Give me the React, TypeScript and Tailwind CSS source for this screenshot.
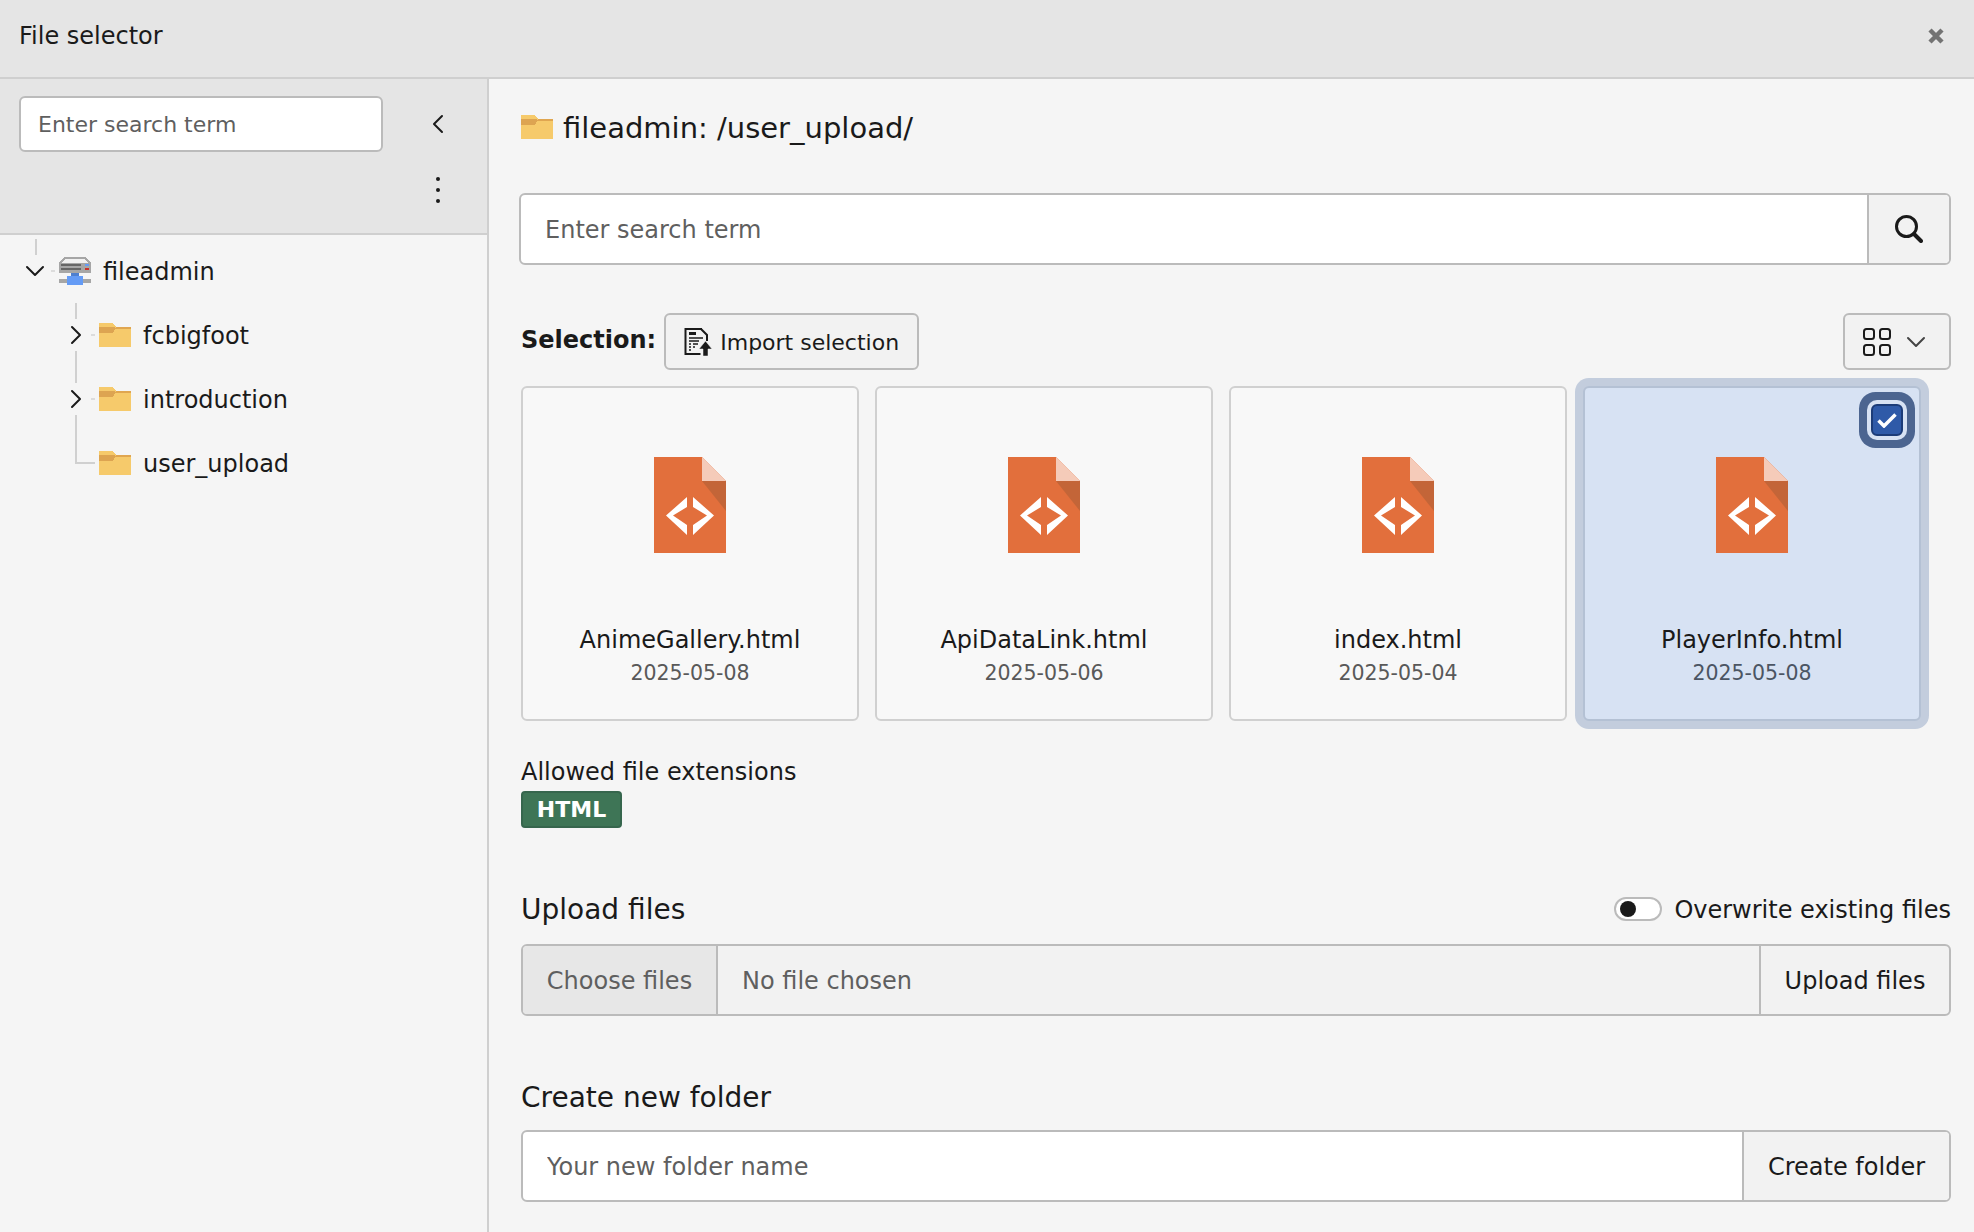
import React from 'react';
import { ChevronDown, ChevronLeft, ChevronRight } from 'lucide-react';

const files = [
  { name: 'AnimeGallery.html', date: '2025-05-08', selected: false },
  { name: 'ApiDataLink.html', date: '2025-05-06', selected: false },
  { name: 'index.html', date: '2025-05-04', selected: false },
  { name: 'PlayerInfo.html', date: '2025-05-08', selected: true },
];

function FolderIcon() {
  return (
    <svg width="32" height="24" viewBox="0 0 32 24" className="shrink-0" shapeRendering="crispEdges">
      <path d="M0 0h14l3 4h15v20H0z" fill="#f6ca6b" />
      <path d="M17 4h15v2H16z" fill="#e0a650" />
      <path d="M0 4h16v2l-2 4H0z" fill="#dda451" />
    </svg>
  );
}

function StorageIcon() {
  return (
    <svg width="32" height="28" viewBox="0 0 32 28" className="shrink-0" shapeRendering="crispEdges">
      <path d="M5 0h22l5 6v10H0V6z" fill="#a6a6a6" />
      <path d="M6 2h20l3 4H3z" fill="#f1f1f1" />
      <path d="M2 7h20v2H2zM2 11h20v2H2z" fill="#666" />
      <path d="M26 7h4v2h-4z" fill="#649bf5" />
      <path d="M26 11h4v2h-4z" fill="#c9302c" />
      <path d="M0 22h32v4H0z" fill="#a6a6a6" />
      <path d="M12 16h8v3h-8z" fill="#4f80cf" />
      <path d="M8 19h16v9H8z" fill="#649bf5" />
    </svg>
  );
}

function HtmlFileIcon() {
  return (
    <svg width="72" height="96" viewBox="0 0 72 96">
      <path d="M0 0h48l24 24v72H0z" fill="#e26f3c" />
      <path d="M48 0v24h24z" fill="#f5cbb9" />
      <path d="M48 24h24v30z" fill="#c36538" />
      <path d="M33 40v10l-14 8.500 14 9.500v10L12 58.500z" fill="#fff" />
      <path d="M39 40v10l14 8.500-14 9.500v10l21-19.500z" fill="#fff" />
    </svg>
  );
}

function ImportIcon() {
  return (
    <svg width="28" height="28" viewBox="0 0 28 28" fill="none">
      <path d="M18 1H1.500v25h15" stroke="#1a1a1a" strokeWidth="2" />
      <path d="M17 1l6 6v6" stroke="#1a1a1a" strokeWidth="2" />
      <path d="M5 4h7v3H5z" fill="#1a1a1a" />
      <path d="M5 10h14M5 13h10M5 16h2M5 19h2M5 22h2M9 16h5M9 19h2" stroke="#1a1a1a" strokeWidth="1.500" />
      <path d="M21.500 13l6.500 8h-4v7h-5v-7h-4z" fill="#1a1a1a" stroke="#f2f2f2" strokeWidth="0.500" />
    </svg>
  );
}

function GridIcon() {
  return (
    <svg width="28" height="28" viewBox="0 0 28 28" fill="none" stroke="#1a1a1a" strokeWidth="2">
      <rect x="1" y="1" width="10" height="10" rx="2.500" />
      <rect x="17" y="1" width="10" height="10" rx="2.500" />
      <rect x="1" y="17" width="10" height="10" rx="2.500" />
      <rect x="17" y="17" width="10" height="10" rx="2.500" />
    </svg>
  );
}

function SearchIcon() {
  return (
    <svg width="28" height="28" viewBox="0 0 28 28" fill="none" stroke="#1a1a1a">
      <circle cx="11.500" cy="11.500" r="10" strokeWidth="3" />
      <path d="M19 19l7 7" strokeWidth="4" strokeLinecap="round" />
    </svg>
  );
}

function FileCard({ name, date, selected }: { name: string; date: string; selected: boolean }) {
  return (
    <div
      className={
        selected
          ? 'relative flex h-[335px] w-[338px] flex-col items-center rounded-[6px] border-2 border-[#b4c1d4] bg-[#d7e2f3] pt-[69px] shadow-[0_0_0_8px_#c3cddd]'
          : 'relative flex h-[335px] w-[338px] flex-col items-center rounded-[6px] border-2 border-[#d0d0d0] bg-[#f8f8f8] pt-[69px]'
      }
    >
      <HtmlFileIcon />
      <div className="mt-[72px] text-[24px] leading-[30px] text-[#1a1a1a]">{name}</div>
      <div className={selected ? 'mt-[3px] text-[20.500px] leading-[30px] text-[#4b5563]' : 'mt-[3px] text-[20.500px] leading-[30px] text-[#595959]'}>
        {date}
      </div>
      {selected && (
        <div className="absolute right-[16px] top-[16px] flex h-[32px] w-[32px] items-center justify-center rounded-[6px] border-2 border-[#1c3c78] bg-[#2f5aa8] shadow-[0_0_0_4px_#d7e2f3,0_0_0_12px_#4c6590]">
          <svg width="20" height="16" viewBox="0 0 20 16" fill="none" stroke="#fff" strokeWidth="3.500">
            <path d="M1.500 8.500l5.500 5.500L18.500 2.500" />
          </svg>
        </div>
      )}
    </div>
  );
}

function TreeRow({ name, last }: { name: string; last?: boolean }) {
  return (
    <div className="relative flex h-[64px] items-center">
      {/* connector lines of the tree */}
      {last ? (
        <>
          <div className="absolute left-[19px] top-0 h-[33px] w-[2px] bg-[#d0d0d0]" />
          <div className="absolute left-[19px] top-[31px] h-[2px] w-[20px] bg-[#d0d0d0]" />
        </>
      ) : (
        <>
          <div className="absolute left-[19px] top-0 h-[16px] w-[2px] bg-[#d0d0d0]" />
          <div className="absolute bottom-0 left-[19px] h-[16px] w-[2px] bg-[#d0d0d0]" />
          <div className="absolute left-[35px] top-[31px] h-[2px] w-[4px] bg-[#dcdcdc]" />
        </>
      )}
      <div className="flex w-[40px] shrink-0 items-center justify-center">
        {!last && <ChevronRight size={32} strokeWidth={1.500} className="text-[#1a1a1a]" />}
      </div>
      <div className="ml-[3px]">
        <FolderIcon />
      </div>
      <span className="ml-[12px] pt-[2px] text-[24px] text-[#1a1a1a]">{name}</span>
    </div>
  );
}

export default function App() {
  return (
    <div className="flex h-[1232px] w-[1974px] flex-col overflow-hidden bg-[#f5f5f5] font-['DejaVu_Sans',sans-serif] text-[#1a1a1a]">
      <header className="flex h-[79px] shrink-0 items-center justify-between border-b-2 border-[#cfcfcf] bg-[#e5e5e5] pl-[19px] pr-[30px] pb-[8px]">
        <h1 className="pt-[2px] text-[24px]">File selector</h1>
        <svg width="16" height="16" viewBox="0 0 16 16" fill="none" stroke="#737373" strokeWidth="4.500" className="mb-[-2px]">
          <path d="M2 2l12 12M14 2L2 14" />
        </svg>
      </header>

      <div className="flex min-h-0 flex-1">
        {/* tree */}
        <aside className="w-[489px] shrink-0 border-r-2 border-[#cfcfcf]">
          <div className="h-[156px] border-b-2 border-[#cfcfcf] bg-[#e5e5e5] pl-[19px] pr-[33px] pt-[17px]">
            <div className="flex items-center justify-between">
              <input
                placeholder="Enter search term"
                className="h-[56px] w-[364px] rounded-[6px] border-2 border-[#bbb] bg-white px-[17px] text-[22px] outline-none placeholder:text-[#5f5f5f]"
              />
              <ChevronLeft size={32} strokeWidth={1.500} className="text-[#1a1a1a]" />
            </div>
            <div className="mt-[25px] flex justify-end pr-[14px]">
              <div className="flex h-[26px] flex-col justify-between">
                <div className="h-[4px] w-[4px] rounded-full bg-[#1a1a1a]" />
                <div className="h-[4px] w-[4px] rounded-full bg-[#1a1a1a]" />
                <div className="h-[4px] w-[4px] rounded-full bg-[#1a1a1a]" />
              </div>
            </div>
          </div>
          <div className="pl-[15px] pt-[4px]">
            <div className="relative flex h-[64px] items-center">
              <div className="absolute left-[20px] top-0 h-[16px] w-[2px] bg-[#d0d0d0]" />
              <div className="flex w-[40px] shrink-0 items-center justify-center">
                <ChevronDown size={32} strokeWidth={1.500} />
              </div>
              <div className="absolute left-[36px] top-[31px] h-[2px] w-[4px] bg-[#dcdcdc]" />
              <div className="ml-[4px]">
                <StorageIcon />
              </div>
              <span className="ml-[12px] pt-[2px] text-[24px]">fileadmin</span>
            </div>
            <div className="pl-[41px]">
              <TreeRow name="fcbigfoot" />
              <TreeRow name="introduction" />
              <TreeRow name="user_upload" last />
            </div>
          </div>
        </aside>

        {/* main */}
        <main className="min-w-0 flex-1 pl-[32px] pr-[23px]">
          <div className="flex h-[78px] items-center pt-[18px]">
            <FolderIcon />
            <h2 className="ml-[10px] pt-[4px] text-[29px]">fileadmin: /user_upload/</h2>
          </div>

          <div className="mt-[36px] -ml-[2px] flex h-[72px] rounded-[6px] border-2 border-[#bbb] bg-white">
            <input
              placeholder="Enter search term"
              className="min-w-0 flex-1 bg-transparent px-[24px] pt-[2px] text-[24px] outline-none placeholder:text-[#5f5f5f]"
            />
            <button className="flex w-[82px] items-center justify-center rounded-r-[4px] border-l-2 border-[#bbb] bg-[#f2f2f2]">
              <SearchIcon />
            </button>
          </div>

          <div className="mt-[48px] flex h-[57px] items-center">
            <span className="pb-[4px] text-[24px] font-bold">Selection:</span>
            <button className="ml-[8px] flex h-[57px] w-[255px] items-center justify-center gap-[8px] rounded-[6px] border-2 border-[#bbb] bg-[#f2f2f2] text-[22px]">
              <ImportIcon />
              <span className="pt-[2px]">Import selection</span>
            </button>
            <button className="ml-auto flex h-[57px] w-[108px] items-center justify-center gap-[9px] rounded-[6px] border-2 border-[#bbb] bg-[#f2f2f2] pl-[1px]">
              <GridIcon />
              <ChevronDown size={32} strokeWidth={1.500} className="text-[#444]" />
            </button>
          </div>

          <div className="mt-[16px] flex gap-[16px]">
            {files.map((f) => (
              <FileCard key={f.name} {...f} />
            ))}
          </div>

          <div className="mt-[36px] text-[24px] leading-[30px]">Allowed file extensions</div>
          <div className="mt-[4px] flex h-[37px] w-[101px] items-center justify-center rounded-[4px] border-2 border-[#36664d] bg-[#3e7556] text-[22px] font-bold text-white">
            HTML
          </div>

          <div className="mt-[64px] flex h-[34px] items-center justify-between">
            <h3 className="pt-[2px] text-[28px]">Upload files</h3>
            <label className="flex items-center gap-[12px] text-[24px]">
              <span className="flex h-[24px] w-[48px] items-center rounded-full border-2 border-[#bbb] bg-white pl-[4px]">
                <span className="h-[16px] w-[16px] rounded-full bg-[#1a1a1a]" />
              </span>
              <span className="pt-[2px]">Overwrite existing files</span>
            </label>
          </div>
          <div className="mt-[18px] flex h-[72px] rounded-[6px] border-2 border-[#bbb] bg-[#f2f2f2] text-[24px]">
            <div className="flex w-[195px] items-center justify-center rounded-l-[4px] border-r-2 border-[#bbb] bg-[#e7e7e7] pt-[2px] text-[#5f5f5f]">
              Choose files
            </div>
            <div className="flex flex-1 items-center pl-[24px] pt-[2px] text-[#5f5f5f]">No file chosen</div>
            <button className="w-[190px] border-l-2 border-[#bbb] pt-[2px]">Upload files</button>
          </div>

          <h3 className="mt-[65px] text-[28px] leading-[34px]">Create new folder</h3>
          <div className="mt-[15px] flex h-[72px] rounded-[6px] border-2 border-[#bbb] bg-white text-[24px]">
            <input
              placeholder="Your new folder name"
              className="min-w-0 flex-1 bg-transparent px-[24px] pt-[2px] outline-none placeholder:text-[#5f5f5f]"
            />
            <button className="w-[207px] rounded-r-[4px] border-l-2 border-[#bbb] bg-[#f2f2f2] pt-[2px]">Create folder</button>
          </div>
        </main>
      </div>
    </div>
  );
}
